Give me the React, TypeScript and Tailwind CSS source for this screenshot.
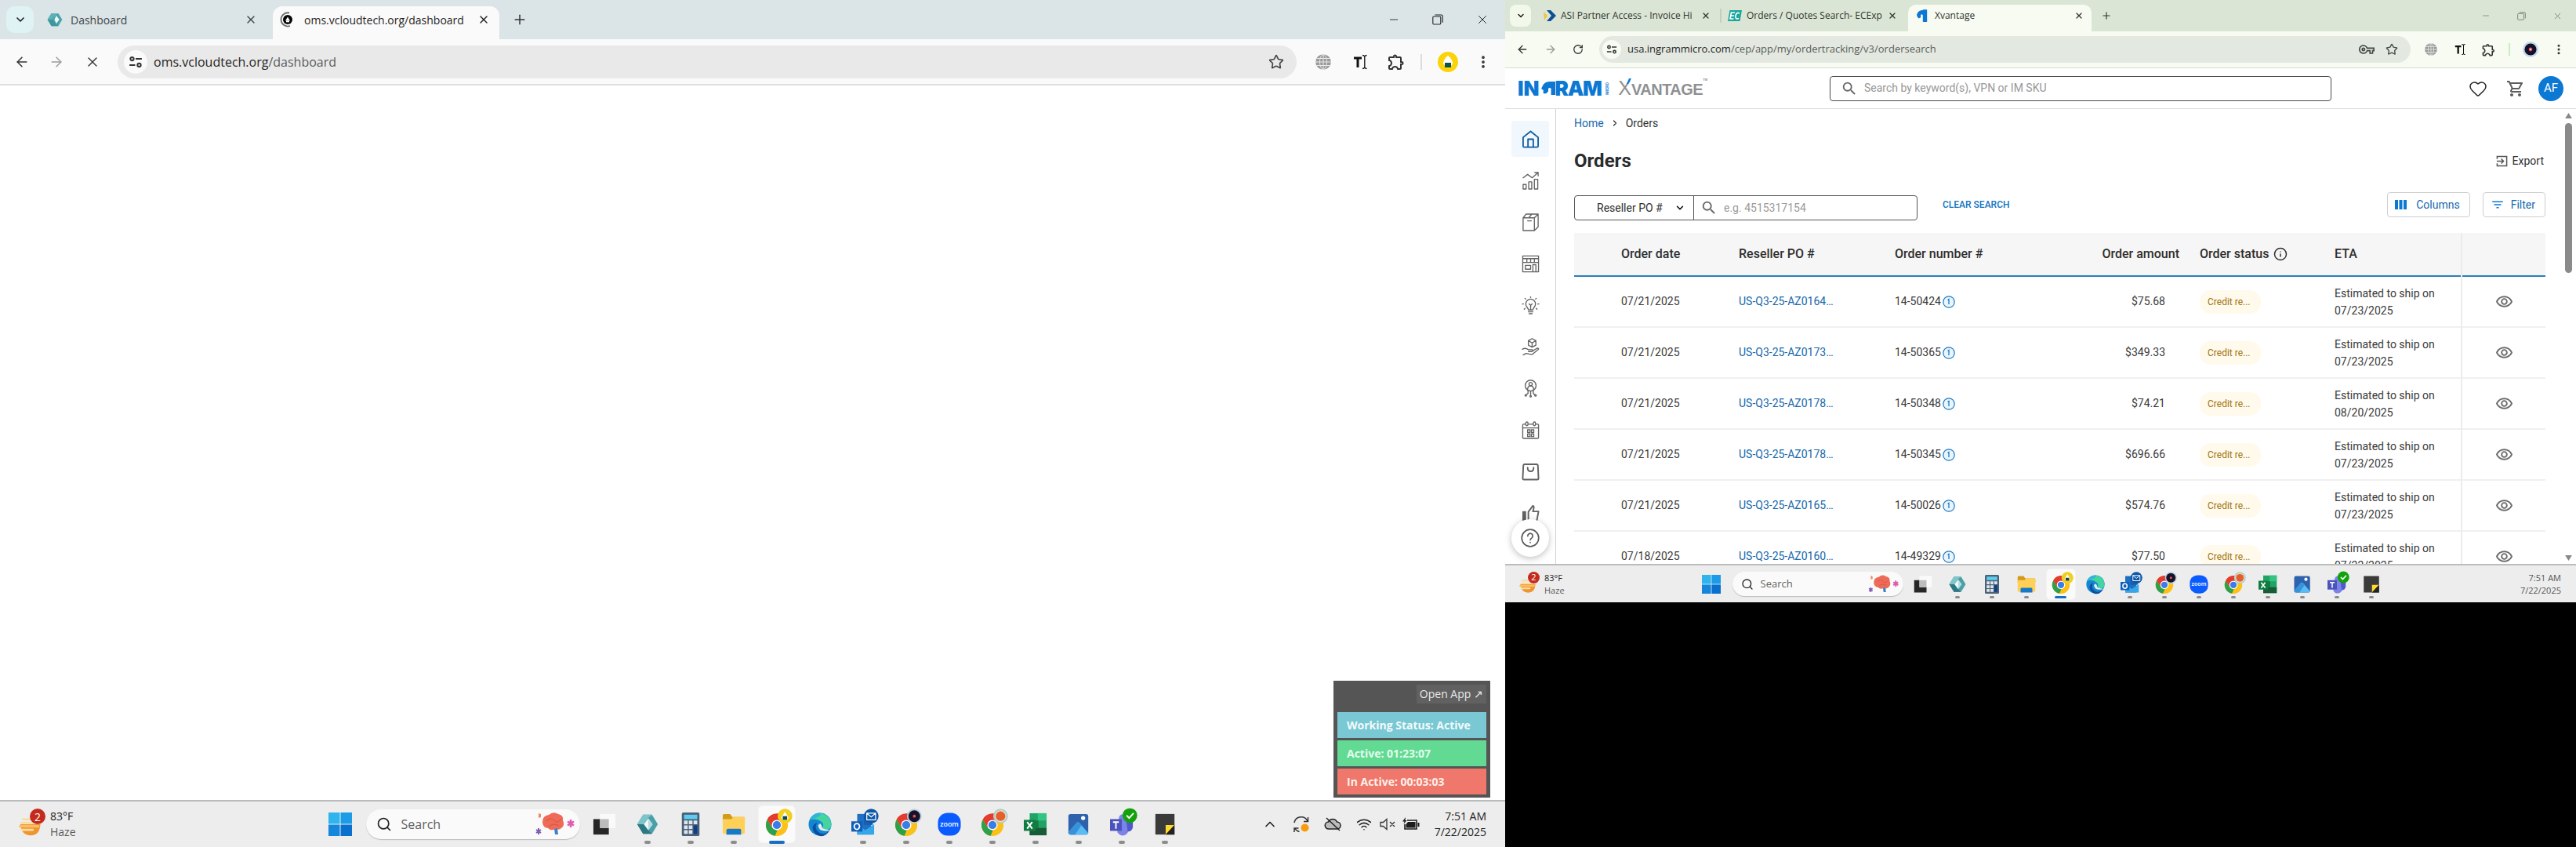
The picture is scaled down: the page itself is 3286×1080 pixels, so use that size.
import React from "react";
import {
  ArrowLeft, ArrowRight, X, Plus, Minus, ChevronDown, ChevronRight, ChevronUp, Star,
  RotateCw, Search, Heart, Info, Wifi, EllipsisVertical,
} from "lucide-react";
import { MdOutlineShoppingCart, MdOutlineRemoveRedEye, MdFilterList, MdOutlineExtension, MdOutlineVpnKey, MdSearch } from "react-icons/md";

type IconProps = { className?: string };

/* ---------- small browser drawings ---------- */

const Restore = ({ className }: IconProps) => (
  <svg viewBox="0 0 14 14" className={className} fill="none" stroke="currentColor" strokeWidth="1.1">
    <rect x="0.8" y="3" width="10" height="10" rx="1.2" />
    <path d="M3.5 1h8a1.7 1.7 0 0 1 1.7 1.7v8" />
  </svg>
);

const SiteSettings = ({ className }: IconProps) => (
  <svg viewBox="0 0 16 16" className={className} fill="none" stroke="currentColor" strokeWidth="1.8">
    <circle cx="4" cy="4.5" r="1.9" />
    <path d="M8 4.5h7M1 11.5h6.5" />
    <circle cx="12" cy="11.5" r="1.9" />
  </svg>
);

const Globe = ({ className }: IconProps) => (
  <svg viewBox="0 0 20 20" className={className}>
    <circle cx="10" cy="10" r="9.8" fill="#9a9a9a" />
    <g fill="none" stroke="#e9e9e9" strokeWidth="1">
      <ellipse cx="10" cy="10" rx="4.5" ry="9.5" />
      <path d="M10 0v20M0 10h20M1.5 5.5h17M1.5 14.5h17" />
    </g>
  </svg>
);

const TextCursor = ({ className }: IconProps) => (
  <svg viewBox="0 0 18 20" className={className} fill="none" stroke="#111">
    <path d="M1 5h10M6 5v12" strokeWidth="3" />
    <path d="M12 1.5q2 0 2.8 1.5q.7-1.5 2.7-1.5M14.8 3v14M12 18.5q2 0 2.8-1.5q.7 1.5 2.7 1.5" strokeWidth="1.3" />
  </svg>
);

const LampAvatar = ({ className }: IconProps) => (
  <svg viewBox="0 0 26 26" className={className}>
    <circle cx="13" cy="13" r="13" fill="#fbd30a" />
    <path d="M13 5c2 1 6 6 6 10l-2 3H9l-2-3c0-4 4-9 6-10z" fill="#fff" />
    <rect x="9" y="14" width="8" height="6" fill="#0d5450" />
  </svg>
);

const DiscAvatar = ({ className }: IconProps) => (
  <svg viewBox="0 0 20 20" className={className}>
    <circle cx="10" cy="10" r="10" fill="#c3d6ea" />
    <circle cx="10" cy="10" r="7.6" fill="#12112a" />
    <circle cx="10" cy="10" r="2.4" fill="#e0474f" />
    <circle cx="10" cy="10" r="1" fill="#fff" />
  </svg>
);

const HexLogo = ({ className }: IconProps) => (
  <svg viewBox="0 0 32 32" className={className}>
    <path d="M9 3h14l8 13-8 13H9L1 16z" fill="#4aa3a8" />
    <path d="M9 3h14l-7 6-7 7-8 0z" fill="#5bb2b7" />
    <path d="M9 29h14l-5-5-8-8H1z" fill="#3d979e" />
    <path d="M19 8l6 8-6 8-4-8z" fill="#eef9fa" />
  </svg>
);

const LoadingFavicon = ({ className }: IconProps) => (
  <svg viewBox="0 0 20 20" className={className}>
    <path d="M13 1.5A8.6 8.6 0 1 0 14 18" fill="none" stroke="#6b6b6b" strokeWidth="1.8" />
    <circle cx="11" cy="10" r="6" fill="#050505" />
    <path d="M11 6.5l3 5H8z" fill="#fff" />
    <rect x="9" y="11.5" width="4" height="1.8" fill="#fff" />
  </svg>
);

const AsiFavicon = ({ className }: IconProps) => (
  <svg viewBox="0 0 16 16" className={className}>
    <path d="M0 3l5 5-4 6z" fill="#f3c33c" />
    <path d="M4 1h5l7 7-7 7H4l6-7z" fill="#0e4f94" />
  </svg>
);

const EcFavicon = ({ className }: IconProps) => (
  <svg viewBox="0 0 18 16" className={className}>
    <path d="M2.5 1H18l-2.500 14H0z" fill="#1aa79d" />
    <path d="M9 4H4.500L3 12h4.500M4 8h4M15 5q-4-2-5 3t4 3.500" fill="none" stroke="#fff" strokeWidth="1.7" />
  </svg>
);

const HookMark = ({ className }: IconProps) => (
  <svg viewBox="0 0 16 18" className={className} fill="#0b78d4">
    <path d="M1.500 5.500Q4 1 9 1l1-.8h5.500V18H9.500V8.500Q8 6 6.500 8v3.500l-3 1.500Q-.5 9.500 1.500 5.500z" />
  </svg>
);

/* ---------- browser window pieces ---------- */

function Omnibox({ host, path, big }: { host: string; path: string; big?: boolean }) {
  return (
    <div className={`flex flex-1 items-center rounded-full ${big ? "h-[42px] bg-[#e9e9e9] pl-2 pr-4" : "h-[34px] bg-[#e3e9e0] pl-1 pr-4"}`}>
      <span className={`flex items-center justify-center rounded-full text-[#333] ${big ? "size-[30px] bg-[#fafafa]" : "size-6 bg-[#f7fbf2]"}`}>
        <SiteSettings className={big ? "size-[18px]" : "size-[14px]"} />
      </span>
      <p className={`ml-2 flex-1 ${big ? "text-[16px]" : "text-[13px]"}`}>
        <span className="text-[#1f1f1f]">{host}</span>
        <span className="text-[#5a5c5a]">{path}</span>
      </p>
      {!big && <MdOutlineVpnKey className="mr-[14px] size-5 text-[#444746]" />}
      <button aria-label="Bookmark this tab">
        <Star className={`text-[#444746] ${big ? "size-[20px]" : "size-4"}`} />
      </button>
    </div>
  );
}

function LeftBrowser() {
  return (
    <div className="flex min-h-0 flex-1 flex-col">
      <div className="flex h-[50px] items-center bg-[#dbe4e6] pl-2">
        <button aria-label="Search tabs" className="flex h-[34px] w-[35px] items-center justify-center rounded-[10px] bg-[#dff3f5]">
          <ChevronDown className="size-4 text-[#1f1f1f]" strokeWidth={2.500} />
        </button>
        <div className="ml-4 flex h-[42px] w-[289px] items-center pl-px pr-[20px] text-[14px] text-[#41464a]">
          <HexLogo className="size-5" />
          <span className="ml-[10px] flex-1">Dashboard</span>
          <button aria-label="Close Dashboard"><X className="size-4" /></button>
        </div>
        <div className="mt-2 flex h-[42px] w-[289px] items-center rounded-t-[12px] bg-[#fafafa] pb-2 pl-2 pr-3 text-[14px] text-[#1f1f1f]">
          <LoadingFavicon className="size-5" />
          <span className="ml-3 flex-1 whitespace-nowrap">oms.vcloudtech.org/dashboard</span>
          <button aria-label="Close tab"><X className="size-4" /></button>
        </div>
        <button aria-label="New tab" className="ml-4"><Plus className="size-5 text-[#333]" strokeWidth={1.800} /></button>
        <div className="ml-auto flex items-center gap-[41px] pr-5 text-[#222]">
          <button aria-label="Minimize"><Minus className="size-4" strokeWidth={1.300} /></button>
          <button aria-label="Restore"><Restore className="size-[14px]" /></button>
          <button aria-label="Close window"><X className="size-[18px]" strokeWidth={1.300} /></button>
        </div>
      </div>
      <div className="flex h-[59px] items-center border-b-2 border-[#dedede] bg-[#fafafa] pl-[18px] pr-[18px] text-[#333]">
        <button aria-label="Back"><ArrowLeft className="size-5" strokeWidth={1.800} /></button>
        <button aria-label="Forward" className="ml-[24px]"><ArrowRight className="size-5 text-[#9b9b9b]" strokeWidth={1.800} /></button>
        <button aria-label="Stop loading" className="ml-[26px] mr-[22px]"><X className="size-5" strokeWidth={1.600} /></button>
        <Omnibox big host="oms.vcloudtech.org" path="/dashboard" />
        <Globe className="ml-6 size-5" />
        <TextCursor className="ml-7 h-5 w-[18px]" />
        <MdOutlineExtension className="ml-[25px] size-6 text-[#333]" />
        <span className="ml-[19px] h-5 border-l-2 border-[#dcdcdc]" />
        <LampAvatar className="ml-5 size-[26px]" />
        <button aria-label="Menu" className="ml-[22px]"><EllipsisVertical className="size-5" strokeWidth={2.500} /></button>
      </div>
      <div className="flex flex-1 items-end justify-end bg-white pb-[3px] pr-[19px]">
        <div className="flex w-[200px] flex-col gap-[3px] bg-[#555] px-[5px] pt-[5px] pb-1">
          <button className="mb-2 self-end bg-[#616161] px-1 text-[14px] leading-6 text-[#e9e9e9]">Open App ↗</button>
          <p className="bg-[#7ac8d3] px-3 text-[14px] leading-[33px] font-bold text-[#f2fbfc]">Working Status: Active</p>
          <p className="bg-[#62da93] px-3 text-[14px] leading-[33px] font-bold text-[#e2fdec]">Active: 01:23:07</p>
          <p className="bg-[#ef776b] px-3 text-[14px] leading-[33px] font-bold text-[#fff1e8]">In Active: 00:03:03</p>
        </div>
      </div>
    </div>
  );
}

/* ---------- sidebar icons ---------- */

const line = { fill: "none", stroke: "currentColor", strokeWidth: 1.4, strokeLinejoin: "round" as const, strokeLinecap: "round" as const };

const sideIcons: { name: string; art: React.ReactNode }[] = [
  { name: "Home", art: <g strokeWidth="1.900"><path d="M2 9.500L12 1.500l10 8V21a1.500 1.500 0 0 1-1.500 1.500h-17A1.500 1.500 0 0 1 2 21z" /><path d="M8.500 22V12h7v10" /></g> },
  { name: "Insights", art: <><path d="M2 8l6-4.500L14 8l8-7M17.500 1H22v4.500" /><path d="M2 17h4v6H2zM9.500 13.500h4V23h-4zM17 10h4.500v13H17z" /></> },
  { name: "Products", art: <><path d="M2 6h15v17H2zM2 6l4-5h16l-5 5M22 1v17l-5 5M9.500 6l4-5M8 10h5" /></> },
  { name: "Store", art: <><path d="M1.500 1.500h21v21h-21zM1.500 5h21M1.500 5v5h21V5M7 5v5M12 5v5M17 5v5M5 14h7v5H5zM15 13h4v9.500M15 13v9.500" /></> },
  { name: "Ideas", art: <><path d="M9 18c0-3-3.500-4-3.500-8a6.500 6.500 0 0 1 13 0c0 4-3.500 5-3.500 8zM9 20.500h6M10 23h4M10 10l2 2 2-2M12 12v6" /><path d="M12 .5v1M4.500 2.500l1 1M19.500 2.500l-1 1M1 10h1.500M21.500 10H23M3.500 17l1-1M20.500 17l-1-1" /></> },
  { name: "Services", art: <><path d="M14 .8l5 2.700v6l-5 2.700-5-2.700v-6zM9 3.500l5 3 5-3M14 6.500v5.500" /><path d="M1 15c3-2 6-1 8 .5h5q2 1.500 0 2.500H9M15 17l6-3.500q2.500 0 1 2L14 22l-8-1.500-4 2" /></> },
  { name: "Partners", art: <><circle cx="12" cy="8" r="7.200" /><circle cx="12" cy="6" r="2.200" /><path d="M8 13q0-4.500 4-4.500t4 4.500M12 15v6M8.500 15v3.500l-2.500 2M15.500 15v3.500l2.500 2" /><circle cx="5.500" cy="21" r="1" /><circle cx="18.500" cy="21" r="1" /><circle cx="12" cy="22.300" r="1" /></> },
  { name: "Calendar", art: <><rect x="1.500" y="4" width="21" height="19" rx="1" /><path d="M1.500 9h21" /><rect x="5.500" y="1" width="3" height="5" rx="1.500" fill="#fff" /><rect x="15.500" y="1" width="3" height="5" rx="1.500" fill="#fff" /><rect x="8" y="11.500" width="3.200" height="3.500" /><rect x="13" y="11.500" width="3.200" height="3.500" /><rect x="8" y="17" width="3.200" height="3.500" /><rect x="13" y="17" width="3.200" height="3.500" /></> },
  { name: "Bag", art: <g strokeWidth="2"><path d="M4 2h16q1.500 0 1.700 2l.8 17q0 1.500-1.500 1.500H3Q1.500 22.500 1.500 21L2.300 4Q2.500 2 4 2z" /><path d="M8 6.500q0 5 4 5t4-5" /></g> },
  { name: "Feedback", art: <g strokeWidth="2"><path d="M2 10h3v13H2z" fill="currentColor" /><path d="M9 23V10l6-8q2 1 1 4l-1 3.500h7.500L20 23z" /></g> },
];

type Row = { date: string; po: string; num: string; amt: string; eta: string };
const rows: Row[] = [
  { date: "07/21/2025", po: "US-Q3-25-AZ0164…", num: "14-50424", amt: "$75.68", eta: "07/23/2025" },
  { date: "07/21/2025", po: "US-Q3-25-AZ0173…", num: "14-50365", amt: "$349.33", eta: "07/23/2025" },
  { date: "07/21/2025", po: "US-Q3-25-AZ0178…", num: "14-50348", amt: "$74.21", eta: "08/20/2025" },
  { date: "07/21/2025", po: "US-Q3-25-AZ0178…", num: "14-50345", amt: "$696.66", eta: "07/23/2025" },
  { date: "07/21/2025", po: "US-Q3-25-AZ0165…", num: "14-50026", amt: "$574.76", eta: "07/23/2025" },
  { date: "07/18/2025", po: "US-Q3-25-AZ0160…", num: "14-49329", amt: "$77.50", eta: "07/22/2025" },
];

function OrdersTable() {
  return (
    <table className="mt-4 w-full table-fixed border-collapse text-left text-[14px] text-[#3a3a3a]">
      <colgroup>
        <col className="w-[210px]" /><col className="w-[199px]" /><col className="w-[203px]" /><col className="w-[186px]" />
        <col className="w-[172px]" /><col className="w-[162px]" /><col className="w-[107px]" />
      </colgroup>
      <thead>
        <tr className="h-[55px] border-b-2 border-[#2a7fb8] bg-[#f6f6f6] text-[16px] text-[#2f2f2f]">
          <th className="pl-[60px] font-medium">Order date</th>
          <th className="font-medium">Reseller PO #</th>
          <th className="font-medium">Order number #</th>
          <th className="pr-[26px] text-right font-medium">Order amount</th>
          <th className="font-medium"><span className="flex items-center gap-[6px]">Order status <Info className="size-[18px]" strokeWidth={2} /></span></th>
          <th className="font-medium">ETA</th>
          <th className="border-l-2 border-[#ececec]" aria-label="View" />
        </tr>
      </thead>
      <tbody>
        {rows.map((r) => (
          <tr key={r.num} className="h-[65px] border-b-2 border-[#f0f0f0]">
            <td className="pl-[60px]">{r.date}</td>
            <td><a href="#order" className="text-[#1668ad]">{r.po}</a></td>
            <td>
              <span className="flex items-center gap-0.5">{r.num}
                <svg viewBox="0 0 16 16" className="size-4 text-[#1f78c0]" fill="#e9f5fd" stroke="currentColor">
                  <circle cx="8" cy="8" r="7.200" strokeWidth="1.200" />
                  <path d="M6.500 5.500L8 4.500V11" fill="none" strokeWidth="1.300" />
                </svg>
              </span>
            </td>
            <td className="pr-[44px] text-right">{r.amt}</td>
            <td><span className="inline-block w-[78px] rounded-[14px] bg-[#fffaeb] pl-[10px] text-[12px] leading-[30px] text-[#a0710f]">Credit re...</span></td>
            <td className="leading-[22px]">Estimated to ship on<br />{r.eta}</td>
            <td className="border-l-2 border-[#ececec]"><button aria-label="View order" className="mx-auto block"><MdOutlineRemoveRedEye className="size-[23px] text-[#6c6c6c]" /></button></td>
          </tr>
        ))}
      </tbody>
    </table>
  );
}

function RightBrowser() {
  return (
    <div className="flex min-h-0 flex-1 flex-col overflow-hidden">
      <div className="flex h-10 shrink-0 items-center bg-[#dbe5d5] pl-[6px] text-[12px] text-[#30342e]">
        <button aria-label="Search tabs" className="flex h-7 w-[27px] items-center justify-center rounded-lg bg-[#f3f9ea]"><ChevronDown className="size-3 text-[#1f1f1f]" strokeWidth={3} /></button>
        <div className="flex w-[243px] items-center border-r-2 border-[#c5cfbf] pl-4 pr-3">
          <AsiFavicon className="h-4 w-4" />
          <span className="ml-[6px] flex-1 whitespace-nowrap">ASI Partner Access - Invoice Hi</span>
          <button aria-label="Close ASI Partner Access"><X className="size-3" strokeWidth={2.500} /></button>
        </div>
        <div className="flex w-[238px] items-center pl-2 pr-[14px]">
          <EcFavicon className="h-4 w-[18px]" />
          <span className="ml-[6px] flex-1 whitespace-nowrap">Orders / Quotes Search- ECExp</span>
          <button aria-label="Close Orders / Quotes Search"><X className="size-3" strokeWidth={2.500} /></button>
        </div>
        <div className="mt-[6px] flex h-[34px] w-[234px] items-center rounded-t-[10px] bg-[#f7fbf2] pr-[10px] pb-[6px] pl-[10px]">
          <HookMark className="h-4 w-[15px]" />
          <span className="ml-[9px] flex-1">Xvantage</span>
          <button aria-label="Close Xvantage"><X className="size-3" strokeWidth={2.500} /></button>
        </div>
        <button aria-label="New tab" className="ml-[12px]"><Plus className="size-[14px]" /></button>
        <div className="ml-auto flex items-center gap-[34px] pr-[17px] text-[#70786c]">
          <button aria-label="Minimize"><Minus className="size-3" strokeWidth={1.500} /></button>
          <button aria-label="Restore"><Restore className="size-[11px]" /></button>
          <button aria-label="Close window"><X className="size-[13px]" strokeWidth={1.500} /></button>
        </div>
      </div>
      <div className="flex h-[47px] shrink-0 items-center border-b border-[#d9dfd0] bg-[#f7fbf2] pl-[14px] pr-[14px] text-[#333]">
        <button aria-label="Back"><ArrowLeft className="size-4" /></button>
        <button aria-label="Forward" className="ml-5"><ArrowRight className="size-4 text-[#9b9b9b]" /></button>
        <button aria-label="Reload" className="ml-[20px] mr-5"><RotateCw className="size-[14px]" strokeWidth={2.200} /></button>
        <Omnibox host="usa.ingrammicro.com" path="/cep/app/my/ordertracking/v3/ordersearch" />
        <Globe className="ml-[18px] size-4" />
        <TextCursor className="ml-[22px] h-4 w-[14px]" />
        <MdOutlineExtension className="ml-5 size-[19px]" />
        <span className="ml-4 h-4 border-l-2 border-[#c5f0c5]" />
        <DiscAvatar className="ml-4 size-5" />
        <button aria-label="Menu" className="ml-[18px]"><EllipsisVertical className="size-4" strokeWidth={2.500} /></button>
      </div>

      <div className="flex min-h-0 flex-1 flex-col bg-white font-['Roboto',sans-serif]">
        <header className="flex h-[52px] shrink-0 items-center border-b border-[#dcdcdc] pl-4 pr-4">
          <div className="flex w-[242px] shrink-0 items-center">
            <div className="flex items-center font-['Inter','Roboto',sans-serif] text-[26px] leading-none font-black text-[#0b78d4]" aria-label="Ingram Micro">
              <span>IN</span>
              <svg viewBox="0 0 20 19" className="ml-0.5 h-[19px] w-[18px]" fill="#0b78d4"><path d="M1 8Q4 0 12 0h8v19h-6v-9q-2-2-4 0v4l-3 3H3V12Q-1 11 1 8z" /></svg>
              <span className="tracking-tighter">RAM</span>
            </div>
            <span className="ml-1 rotate-180 text-[5px] leading-[7px] font-bold text-[#0b78d4] [writing-mode:vertical-rl]">MICRO</span>
            <div className="ml-auto flex items-baseline font-['Liberation_Sans',sans-serif] leading-none font-bold text-[#8f9092]">
              <span className="relative text-[25px] font-normal">X
                <svg viewBox="0 0 6 7" className="absolute top-0 right-0 h-[7px] w-[6px]"><path d="M3 0h3L2 7H0z" fill="#0b78d4" /></svg>
              </span>
              <span className="text-[20px] tracking-tight">VANTAGE</span>
              <span className="self-start text-[4px]">TM</span>
            </div>
          </div>
          <label className="ml-[156px] flex h-8 w-[640px] items-center gap-2 rounded border border-[#4a4a4a] pl-[13px]">
            <MdSearch className="size-[22px] text-[#666]" />
            <input aria-label="Search products" placeholder="Search by keyword(s), VPN or IM SKU" className="flex-1 text-[14px] outline-none placeholder:text-[#979797]" />
          </label>
          <button aria-label="Favorites" className="ml-auto"><Heart className="size-6 text-[#222]" strokeWidth={1.500} /></button>
          <button aria-label="Cart" className="ml-6"><MdOutlineShoppingCart className="size-6 text-[#5c5c5c]" /></button>
          <button className="ml-[17px] size-8 rounded-full bg-[#0b78d4] text-[15px] text-white">AF</button>
        </header>

        <div className="flex min-h-0 flex-1">
          <nav className="relative flex w-[65px] shrink-0 flex-col items-center gap-[7px] overflow-hidden border-r border-[#d0d0d0] pt-[15px]">
            {sideIcons.map((s, i) => (
              <a key={s.name} href="#nav" aria-label={s.name} className={`flex h-[46px] w-12 shrink-0 items-center justify-center rounded ${i === 0 ? "bg-[#f0f7fd] text-[#0f5c9e]" : "text-[#626262]"}`}>
                <svg viewBox="0 0 24 24" className="size-[23px]" {...line}>{s.art}</svg>
              </a>
            ))}
            <button aria-label="Help" className="absolute bottom-[9px] left-2 flex size-12 items-center justify-center rounded-full bg-white shadow-[0_2px_8px_rgba(0,0,0,0.25)]">
              <svg viewBox="0 0 24 24" className="size-6 text-[#5a5a5a]" {...line} strokeWidth="1.700"><circle cx="12" cy="12" r="10.800" /><path d="M8.800 9.500a3.200 3.200 0 1 1 5 2.600q-1.800 1.200-1.800 2.400M12 17.500v.3" /></svg>
            </button>
          </nav>
          <main className="min-w-0 flex-1 overflow-hidden pt-2 pl-[23px] pr-[25px]">
            <nav aria-label="Breadcrumb" className="flex items-center gap-2 text-[14px] leading-5 text-[#333]">
              <a href="#home" className="text-[#1668ad]">Home</a>
              <ChevronRight className="size-3" strokeWidth={2.500} />
              <span>Orders</span>
            </nav>
            <div className="mt-[22px] flex items-center justify-between">
              <h1 className="text-[24px] leading-8 font-bold text-[#2b2b2b]">Orders</h1>
              <button className="flex items-center gap-[6px] pr-[2px] text-[14px] text-[#2f2f2f]">
                <svg viewBox="0 0 16 16" className="size-[15px] text-[#555]" fill="none" stroke="currentColor" strokeWidth="1.600"><path d="M1.500 5V1.500h13v13h-13V11M1 8h9M7 4.800L10.200 8 7 11.200" /></svg>
                Export
              </button>
            </div>
            <div className="mt-6 flex items-start">
              <div className="mt-1 flex h-8 rounded border border-[#555]">
                <label className="relative flex items-center border-r border-[#555]">
                  <select aria-label="Search field" className="h-full w-[151px] appearance-none pl-7 text-[14px] text-[#2f2f2f] outline-none"><option>Reseller PO #</option></select>
                  <ChevronDown className="pointer-events-none absolute right-[10px] size-[14px]" strokeWidth={2.500} />
                </label>
                <label className="flex items-center gap-2 pl-2">
                  <MdSearch className="size-[22px] text-[#666]" />
                  <input aria-label="Reseller PO number" placeholder="e.g. 4515317154" className="w-[246px] text-[14px] outline-none placeholder:text-[#9a9a9a]" />
                </label>
              </div>
              <button className="ml-8 text-[12px] leading-8 font-medium text-[#1274c4]">CLEAR SEARCH</button>
              <button className="ml-auto flex h-8 items-center gap-3 rounded-sm border border-[#cfcfcf] px-[9px] text-[14px] text-[#1668ad]">
                <svg viewBox="0 0 15 12" className="h-3 w-[15px]" fill="#0b78d4"><path d="M0 0h4v12H0zM5.500 0h4v12h-4zM11 0h4v12h-4z" /></svg>
                <span className="pr-[3px]">Columns</span>
              </button>
              <button className="ml-4 flex h-8 items-center gap-2 rounded-sm border border-[#cfcfcf] px-[9px] text-[14px] text-[#1668ad]">
                <MdFilterList className="size-[18px] text-[#0b78d4]" />
                <span className="pr-[3px]">Filter</span>
              </button>
            </div>
            <OrdersTable />
          </main>
          <div className="flex w-[14px] flex-col items-start pt-[5px] pb-1" aria-hidden="true">
            <svg viewBox="0 0 10 8" className="h-[7px] w-[9px]" fill="#888"><path d="M5 0l5 8H0z" /></svg>
            <span className="mt-[6px] h-[191px] w-[9px] rounded-full bg-[#8a8a8a]" />
            <svg viewBox="0 0 10 8" className="mt-auto h-[7px] w-[9px]" fill="#888"><path d="M0 0h10L5 8z" /></svg>
          </div>
        </div>
      </div>
    </div>
  );
}

/* ---------- task bar ---------- */

const ChromeArt = ({ badge }: { badge: "lamp" | "disc" | "orange" }) => (
  <>
    <circle cx="16" cy="17" r="15" fill="#fbc116" />
    <path d="M16 17L3 9.500A15 15 0 0 1 29 9.500z" fill="#e33b2e" />
    <path d="M3 9.500L10 21l6.500 3.500L13.500 31.800A15 15 0 0 1 3 9.500z" fill="#2da04c" />
    <path d="M16 10h14a15 15 0 0 0-27-.5L10 21z" fill="#e33b2e" />
    <circle cx="16" cy="17" r="7" fill="#fff" />
    <circle cx="16" cy="17" r="5.500" fill="#3a7de8" />
    {badge === "lamp" && <g><circle cx="27" cy="5" r="10" fill="#f2cf1d" /><path d="M27-1l5 8-2 3h-6l-2-3z" fill="#fff" /><path d="M24 5h6v5h-6z" fill="#134a48" /></g>}
    {badge === "disc" && <g><circle cx="27" cy="5" r="10" fill="#b9cfe2" /><circle cx="27" cy="5" r="8" fill="#15122a" /><circle cx="27" cy="5" r="2" fill="#e8505a" /></g>}
    {badge === "orange" && <g><circle cx="27" cy="5" r="10" fill="#a9cfc8" /><circle cx="27" cy="5" r="8" fill="#f4d8c6" /><circle cx="27" cy="5" r="6.500" fill="#e2602c" /></g>}
  </>
);

const apps: { name: string; run: boolean; active?: boolean; art: React.ReactNode }[] = [
  { name: "Task view", run: false, art: <><path d="M1 9h21v21H1z" fill="#262626" /><path d="M10 2h21v19H10z" fill="#fafafa" /><path d="M10 9h12v12H10z" fill="#bcbcbc" /></> },
  { name: "Monitor", run: true, art: <><path d="M10 3h12l8 13-8 13H10L2 16z" fill="#4aa0a6" /><path d="M10 3h12l-6 5-5 8H2z" fill="#7fc4c8" /><path d="M10 29h12l-5-5-6-8H2z" fill="#2c7883" /><path d="M17 8l6 8-6 8-6-8z" fill="#f0fafb" /><path d="M17 8l6 8-6 8z" fill="#b5dde2" /></> },
  { name: "Calculator", run: true, art: <><rect x="4" y="0" width="24" height="32" rx="2" fill="#4c6178" /><path d="M7 3h18v6H7z" fill="#5ccdf0" /><path d="M7 11h5v5H7zM13.500 11h5v5h-5zM20 11h5v5h-5zM7 17.500h5v5H7zM13.500 17.500h5v5h-5zM7 24h5v5H7zM13.500 24h5v5h-5z" fill="#dfe5ec" /><path d="M20 17.500h5V29h-5z" fill="#0c3f86" /></> },
  { name: "File Explorer", run: true, art: <><path d="M1 4q0-2 2-2h8l3 4h16q1 0 1 2v5H1z" fill="#d39b16" /><path d="M1 9h12l2-3h15q1 0 1 1v20q0 2-2 2H3q-2 0-2-2z" fill="#ffd058" /><path d="M6 30v-6q0-2 2-2h16q2 0 2 2v6z" fill="#1878c8" /></> },
  { name: "Chrome", run: true, active: true, art: <ChromeArt badge="lamp" /> },
  { name: "Edge", run: false, art: <><circle cx="16" cy="16" r="15.500" fill="#1286d3" /><path d="M2 10A15.500 15.500 0 0 1 31.500 16q0 7-7 7-5 0-5.500-2.500 3-3 0-7Q11 7 2 10z" fill="#43d4a0" /><path d="M2 10A15.500 15.500 0 0 1 16 .5Q20 5 2 10z" fill="#30b5d8" /><path d="M12 14q-5 8 3 13.500 7 4 14-3-6 10-15 7Q6 28 6 20q1-5 6-6z" fill="#0d4f9e" /><path d="M13.500 17q0 9 12 8l4-1q-3-1-5-1-7-1-6-5l-2-3z" fill="#ededed" /></> },
  { name: "Outlook", run: true, art: <><path d="M8 2h19v28H8z" fill="#1f6fc4" /><path d="M8 16l11 8 12-8v14H8z" fill="#35a6e8" /><path d="M17 4h12v13H17z" fill="#1b5fae" /><path d="M0 12h15v14H0z" fill="#0f5fb8" /><ellipse cx="7.500" cy="19" rx="3.600" ry="4" fill="none" stroke="#fff" strokeWidth="2" /><circle cx="27" cy="5" r="10" fill="#0d57a8" /><path d="M21 1h12v9H21zM21 1l6 5 6-5" fill="none" stroke="#fff" strokeWidth="1.300" /></> },
  { name: "Chrome work", run: true, art: <ChromeArt badge="disc" /> },
  { name: "Zoom", run: true, art: <><rect x="0.500" y="0.500" width="31" height="31" rx="13" fill="#0b5cff" /><text x="16" y="19" textAnchor="middle" fontSize="9.500" fontWeight="600" fill="#fff" fontFamily="Open Sans, sans-serif">zoom</text></> },
  { name: "Chrome personal", run: true, art: <ChromeArt badge="orange" /> },
  { name: "Excel", run: true, art: <><path d="M8 1h23v30H8z" fill="#21a366" /><path d="M19 1h12v10H19z" fill="#33c481" /><path d="M8 11h12v10H8z" fill="#107c41" /><path d="M8 21h23v10H8z" fill="#185c37" /><path d="M0 10h16v15H0z" fill="#107c41" /><path d="M4.500 13l7 9M11.500 13l-7 9" stroke="#fff" strokeWidth="2.200" /></> },
  { name: "Photos", run: true, art: <><rect x="2" y="2" width="27" height="28" rx="3" fill="#2f62ad" /><path d="M2 27L13 14q2-2 4 0l12 14q-1 2-3 2H5q-3 0-3-3z" fill="#58bdf3" /><path d="M2 27L13 14q2-2 4 0l3 3-9 13H5q-3 0-3-3z" fill="#3792dc" /><circle cx="22" cy="7.500" r="2.800" fill="#fff" /></> },
  { name: "Teams", run: true, art: <><circle cx="18" cy="8" r="6" fill="#7b83eb" /><path d="M10 11h15v11a8 8 0 0 1-15 5z" fill="#7b83eb" /><path d="M22 11h9v9q-1 6-7 6z" fill="#5059c9" /><path d="M0 9h16v16H0z" fill="#4b53bc" /><path d="M4 13h8M8 13v9" stroke="#fff" strokeWidth="2" /><circle cx="27" cy="4" r="10" fill="#13a10e" /><path d="M22.500 4l3.500 3.500 6-6.500" stroke="#fff" strokeWidth="2" fill="none" /></> },
  { name: "Sticky Notes", run: true, art: <><path d="M3 2h26v28H3z" fill="#3a3a3a" /><path d="M17 17h12l-12 13z" fill="#ffd92e" /><path d="M17 30l12-13v13z" fill="#222" /></> },
];

const Weather = ({ className }: IconProps) => (
  <svg viewBox="0 0 36 40" className={className}>
    <path d="M6 13h10M4 18h22" stroke="#f9dc9b" strokeWidth="3" strokeLinecap="round" />
    <path d="M2 20h29q-1 16-14 16T2 20z" fill="#ef952f" />
    <path d="M2 23h26" stroke="#f7bf62" strokeWidth="3.500" strokeLinecap="round" />
    <path d="M4 28h16" stroke="#fbdca4" strokeWidth="3" strokeLinecap="round" />
  </svg>
);

const Brain = ({ className }: IconProps) => (
  <svg viewBox="0 0 52 36" className={className}>
    <path d="M9 15q0-8 8-9 6-5 12-1 7 1 6 8 3 6-2 10-3 3-8 1-5 3-9-1-7-1-7-8z" fill="#ef6b57" />
    <path d="M14 14q6-6 10-1t9-2M17 21q6-5 13-1" stroke="#d9584a" strokeWidth="1.200" fill="none" />
    <path d="M24 24l4-1 1 8h-4z" fill="#3b82c9" />
    <path d="M4 4l3 1v4l-3 1z" fill="#ee8a5e" />
    <path d="M4 23v8M1 25l6 4M7 25l-6 4" stroke="#8159b5" strokeWidth="2" />
    <path d="M45 12v10M41 14.500l8 5M49 14.500l-8 5" stroke="#dd5cae" strokeWidth="2.600" />
  </svg>
);

function TaskBar({ big }: { big?: boolean }) {
  const dim = big ? "size-[30px]" : "size-6";
  return (
    <footer className={`relative flex shrink-0 items-center bg-[#ededed] ${big ? "h-[60px] border-t-2 border-[#b9bdbd] text-[14px]" : "h-[49px] border-t-2 border-[#bcbcbc] text-[11px]"}`}>
      <div className={`relative flex flex-1 items-center gap-2 ${big ? "pl-6" : "pl-[18px]"}`}>
        <Weather className={big ? "h-9 w-8" : "h-7 w-6"} />
        <span className={`absolute flex items-center justify-center rounded-full bg-[#c42b1c] text-white ${big ? "top-0 left-[38px] size-5 text-[14px]" : "top-0 left-[29px] size-[15px] text-[11px]"}`}>2</span>
        <p className={`text-[#1c1c1c] ${big ? "leading-5" : "leading-4"}`}>83°F<br /><span className="text-[#5b5b5b]">Haze</span></p>
      </div>
      <div className="ml-3 flex items-center">
        <button aria-label="Start" className={big ? "mr-[18px]" : "mr-[15px]"}>
          <svg viewBox="0 0 30 30" className={dim}>
            <path d="M0 0h14.500v14.500H0z" fill="#2fb4ee" /><path d="M15.500 0H30v14.500H15.500z" fill="#1c9ce6" /><path d="M0 15.500h14.500V30H0z" fill="#1487dc" /><path d="M15.500 15.500H30V30H15.500z" fill="#0a70ce" />
          </svg>
        </button>
        <label className={`flex items-center rounded-full bg-[#fafafa] shadow-[0_1px_1px_#bbb] ${big ? "h-[38px] w-[273px] pl-[13px] pr-[5px]" : "h-[31px] w-[218px] pl-[11px] pr-1"}`}>
          <Search className={`text-[#222] ${big ? "size-5" : "size-4"}`} strokeWidth={2} />
          <input aria-label="Search" placeholder="Search" className={`min-w-0 flex-1 outline-none placeholder:text-[#606060] ${big ? "ml-3 text-[16px]" : "ml-[9px] text-[13px]"}`} />
          <Brain className={big ? "h-9 w-[52px]" : "h-7 w-[41px]"} />
        </label>
        <div className={`flex ${big ? "ml-1" : "ml-[3px]"}`}>
          {apps.map((a) => (
            <button key={a.name} aria-label={a.name} className={`relative flex items-center justify-center ${big ? "h-[58px] w-[55px]" : "h-[47px] w-11"}`}>
              <span className={`flex items-center justify-center rounded ${a.active ? "bg-[#fafafa] outline outline-[#f3f3f3]" : ""} ${big ? "h-[46px] w-[46px]" : "h-[38px] w-9"}`}>
                <svg viewBox="0 0 32 32" className={`overflow-visible ${dim}`}>{a.art}</svg>
              </span>
              {a.run && <span className={`absolute rounded-full ${a.active ? "bg-[#1570c4]" : "bg-[#8c8c8c]"} ${big ? "bottom-[4px] h-1" : "bottom-[5px] h-[3px]"} ${a.active ? (big ? "w-5" : "w-[15px]") : (big ? "w-2" : "w-[6px]")}`} />}
            </button>
          ))}
        </div>
      </div>
      <div className={`flex flex-1 items-center justify-end ${big ? "pr-6 text-[#222]" : "pr-[19px] text-[#555]"}`}>
        {big && (
          <>
            <ChevronUp className="mr-[19px] size-5" strokeWidth={2} />
            <svg viewBox="0 0 22 22" className="mr-[18px] size-[22px]" fill="none" stroke="#333" strokeWidth="1.500"><path d="M2 9a9 9 0 0 1 17-2M19.500 2v5.500H14M2 21v-5h5.500M2.500 16q2 3.500 6 4.500" /><circle cx="15.500" cy="15.500" r="5" fill="#fb9a0c" stroke="none" /></svg>
            <svg viewBox="0 0 22 18" className="mr-[19px] h-[18px] w-[22px]" stroke="#222" strokeWidth="1.500"><path d="M6 15a4.500 4.500 0 0 1-.5-9 6 6 0 0 1 11 0 4.500 4.500 0 0 1 0 9z" fill="#bbb" /><path d="M3 1l17 16" /></svg>
            <Wifi className="mr-[10px] size-5" strokeWidth={1.900} />
            <svg viewBox="0 0 20 16" className="mr-[9px] h-4 w-5" fill="none" stroke="#333" strokeWidth="1.300"><path d="M1 5.500h3.500L9 1.500v13L4.500 10.500H1zM13 5l6 6M19 5l-6 6" /></svg>
            <svg viewBox="0 0 22 18" className="mr-[19px] h-[18px] w-[22px]"><path d="M6 4h12v11H3V9" fill="none" stroke="#1c1c1c" strokeWidth="1.600" /><path d="M7 6h9.500v7.500h-12V9zM19.500 7h2v5h-2z" fill="#1c1c1c" /><path d="M4 0L0 5.500h2.500L1.500 9l4-5H3.500z" fill="#1c1c1c" /></svg>
          </>
        )}
        <p className={`text-right whitespace-nowrap ${big ? "leading-5" : "leading-4"}`}>7:51 AM<br />7/22/2025</p>
      </div>
    </footer>
  );
}

export default function App() {
  return (
    <div className="flex min-h-screen bg-black font-['Open_Sans','Noto_Sans',sans-serif]">
      <section className="flex h-screen min-w-0 flex-[1920_1_0%] flex-col bg-white">
        <LeftBrowser />
        <TaskBar big />
      </section>
      <section className="flex min-w-0 flex-[1366_1_0%] flex-col">
        <div className="flex aspect-[1366/768] flex-col overflow-hidden bg-white">
          <RightBrowser />
          <TaskBar />
        </div>
      </section>
    </div>
  );
}
